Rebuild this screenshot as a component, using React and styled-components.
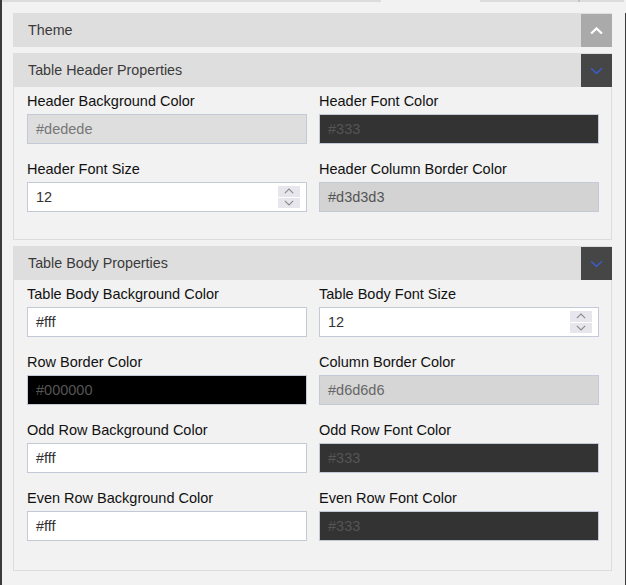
import React from 'react';
import styled, { createGlobalStyle } from 'styled-components';

const GlobalStyle = createGlobalStyle`
  html, body {
    margin: 0;
    padding: 0;
    background: #f2f2f2;
  }
  body {
    font-family: 'Liberation Sans', Arial, sans-serif;
  }
`;

const Frame = styled.div`
  width: 624px;
  height: 585px;
  border-left: 2px solid #3a3a3a;
  background: #f2f2f2;
  overflow: hidden;
`;

const TabStrip = styled.div`
  display: flex;
  height: 2px;
`;

const TabStub = styled.div`
  width: ${(p) => p.width}px;
  margin-left: ${(p) => p.offset || 0}px;
  background: #dcdcdc;
  border-right: ${(p) => (p.edge ? '2px solid #c4c4c4' : 'none')};
`;

const Main = styled.div`
  margin-top: 11px;
  height: 572px;
  border-right: 1px solid #3a3a3a;
  padding: 0 13px 0 11px;
  display: flex;
  flex-direction: column;
  gap: 6px;
`;

const Section = styled.section`
  display: flex;
  flex-direction: column;
`;

const Bar = styled.div`
  display: flex;
  align-items: stretch;
  height: 34px;
  background: #dedede;
`;

const BarTitle = styled.div`
  flex: 1;
  display: flex;
  align-items: center;
  padding-left: 15px;
  font-size: 14.3px;
  color: #3a3a3a;
`;

const Toggle = styled.button`
  width: 31px;
  margin: 1px 0 0;
  padding: 0;
  border: none;
  background: ${(p) => (p.open ? '#aaaaaa' : '#464646')};
  display: flex;
  align-items: center;
  justify-content: center;
  cursor: pointer;
`;

const Panel = styled.div`
  border: 1px solid #dcdcdc;
  border-top: none;
  padding: 6px 12px ${(p) => p.bottom}px 13px;
  display: grid;
  grid-template-columns: 280px 280px;
  column-gap: 12px;
`;

const Field = styled.div`
  display: flex;
  flex-direction: column;
  margin-bottom: 17px;
`;

const Label = styled.label`
  font-size: 14.5px;
  line-height: 16px;
  color: #111;
  margin-bottom: 5px;
  white-space: nowrap;
`;

const InputBox = styled.div`
  position: relative;
  height: 28px;
  border: 1px solid #c3cad6;
  background: ${(p) => p.bg};
  display: flex;
  align-items: center;
  padding-left: 8px;
  font-size: 14.5px;
  color: ${(p) => p.fg};
`;

const Spinner = styled.div`
  position: absolute;
  right: 6px;
  top: 3px;
  width: 22px;
  height: 22px;
  display: flex;
  flex-direction: column;
  gap: 1px;
`;

const SpinHalf = styled.div`
  flex: 1;
  background: #e6e6ec;
  display: flex;
  align-items: center;
  justify-content: center;
`;

const Chevron = ({ dir, color, size = 12, width = 2 }) => (
  <svg width={size} height={size * 0.6} viewBox="0 0 12 7">
    <path
      d={dir === 'up' ? 'M1 6 L6 1.2 L11 6' : 'M1 1 L6 5.8 L11 1'}
      fill="none"
      stroke={color}
      strokeWidth={width}
    />
  </svg>
);

const white = { bg: '#fff', fg: '#333' };

const ColorField = ({ label, value, bg, fg, number }) => (
  <Field>
    <Label>{label}</Label>
    <InputBox bg={bg} fg={fg}>
      {value}
      {number && (
        <Spinner>
          <SpinHalf>
            <Chevron dir="up" color="#8a8a8a" size={10} width={1.3} />
          </SpinHalf>
          <SpinHalf>
            <Chevron dir="down" color="#8a8a8a" size={10} width={1.3} />
          </SpinHalf>
        </Spinner>
      )}
    </InputBox>
  </Field>
);

const headerFields = [
  { label: 'Header Background Color', value: '#dedede', bg: '#dedede', fg: '#777' },
  { label: 'Header Font Color', value: '#333', bg: '#333', fg: '#555' },
  { label: 'Header Font Size', value: '12', ...white, number: true },
  { label: 'Header Column Border Color', value: '#d3d3d3', bg: '#d3d3d3', fg: '#555' },
];

const bodyFields = [
  { label: 'Table Body Background Color', value: '#fff', ...white },
  { label: 'Table Body Font Size', value: '12', ...white, number: true },
  { label: 'Row Border Color', value: '#000000', bg: '#000', fg: '#555' },
  { label: 'Column Border Color', value: '#d6d6d6', bg: '#d6d6d6', fg: '#666' },
  { label: 'Odd Row Background Color', value: '#fff', ...white },
  { label: 'Odd Row Font Color', value: '#333', bg: '#333', fg: '#555' },
  { label: 'Even Row Background Color', value: '#fff', ...white },
  { label: 'Even Row Font Color', value: '#333', bg: '#333', fg: '#555' },
];

const App = () => {
  return (
    <Frame>
      <GlobalStyle />
      <TabStrip>
        <TabStub width={379} />
        <TabStub width={98} offset={99} edge />
        <TabStub width={44} />
      </TabStrip>
      <Main>
        <Section>
          <Bar>
            <BarTitle>Theme</BarTitle>
            <Toggle open>
              <Chevron dir="up" color="#fff" size={13} width={2} />
            </Toggle>
          </Bar>
        </Section>
        <Section>
          <Bar>
            <BarTitle>Table Header Properties</BarTitle>
            <Toggle>
              <Chevron dir="down" color="#3b5cc4" size={13} width={1.4} />
            </Toggle>
          </Bar>
          <Panel bottom={10}>
            {headerFields.map((f) => (
              <ColorField key={f.label} {...f} />
            ))}
          </Panel>
        </Section>
        <Section>
          <Bar>
            <BarTitle>Table Body Properties</BarTitle>
            <Toggle>
              <Chevron dir="down" color="#3b5cc4" size={13} width={1.4} />
            </Toggle>
          </Bar>
          <Panel bottom={12}>
            {bodyFields.map((f) => (
              <ColorField key={f.label} {...f} />
            ))}
          </Panel>
        </Section>
      </Main>
    </Frame>
  );
};

export default App;
